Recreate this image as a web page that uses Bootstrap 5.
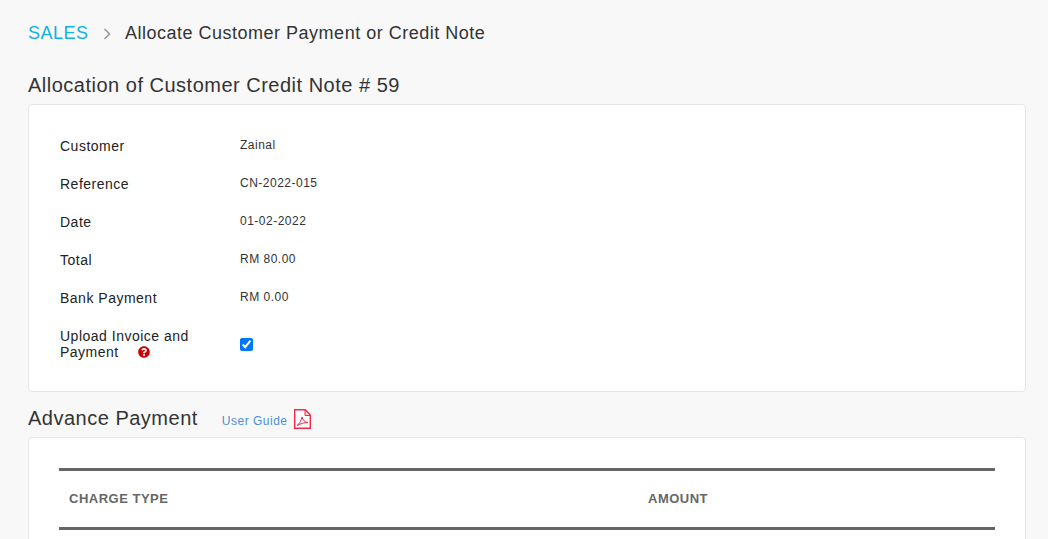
<!DOCTYPE html>
<html lang="en">
<head>
    <meta charset="UTF-8">
    <meta name="viewport" content="width=device-width, initial-scale=1.0">
    <title>Allocate Customer Payment or Credit Note</title>
    <link href="https://cdn.jsdelivr.net/npm/bootstrap@5.3.0/dist/css/bootstrap.min.css" rel="stylesheet">
    <style>
        html { overflow: hidden; }
        body {
            background: #f8f8f8;
            color: #333;
            font-family: "Liberation Sans", Arial, sans-serif;
            letter-spacing: .5px;
        }
        .page-wrap { padding: 23px 22px 0 28px; }
        .crumb-bar { height: 21px; font-size: 18px; line-height: 21px; margin-bottom: 30px; }
        .crumb-bar a { color: #0fb1e6; text-decoration: none; }
        .crumb-sep { width: 36.5px; }
        .section-title { font-size: 20px; font-weight: 400; line-height: 23px; margin: 0; letter-spacing: .5px; }
        .white-box { background: #fff; border: 1px solid #e6e6e6; border-radius: 4px; }
        .info-box { height: 288px; margin-top: 7px; margin-bottom: 15px; padding: 22px 31px 0; }
        .info-row { height: 38px; }
        .info-label { width: 180px; font-size: 14px; line-height: 16px; color: #222; padding-top: 11px; padding-right: 30px; }
        .info-value { font-size: 12px; line-height: 14px; padding-top: 11px; }
        .upload-row { height: 50px; margin-top: 0; }
        .upload-row .info-label { padding-top: 3px; }
        .help-icon { width: 12px; height: 12px; margin-left: 15px; vertical-align: -1px; }
        .upload-row input { margin: 4px 0 0; width: 13px; height: 13px; }
        .guide-link { font-size: 12px; color: #4a90d9; text-decoration: none; margin-left: 24px; padding-top: 4px; }
        .pdf-icon { width: 17px; height: 20px; margin-left: 6px; }
        .table-box { margin-top: 7px; padding: 30px 30px 20px; height: 200px; }
        .charge-head { border-top: 3px solid #666; border-bottom: 3px solid #666; height: 62px; color: #666; font-size: 13px; font-weight: 700; }
        .charge-col { width: 589px; padding-left: 10px; }
    </style>
</head>
<body>
    <div class="page-wrap">
        <!-- Breadcrumb -->
        <div class="crumb-bar d-flex align-items-center">
            <a href="#">SALES</a>
            <span class="crumb-sep d-flex justify-content-center">
                <svg width="8" height="12" viewBox="0 0 8 12"><path d="M1.5 1l5 5-5 5" fill="none" stroke="#999" stroke-width="1.6"/></svg>
            </span>
            <span>Allocate Customer Payment or Credit Note</span>
        </div>

        <h5 class="section-title">Allocation of Customer Credit Note # 59</h5>
        <div class="white-box info-box">
            <div class="info-row d-flex"><div class="info-label">Customer</div><div class="info-value">Zainal</div></div>
            <div class="info-row d-flex"><div class="info-label">Reference</div><div class="info-value">CN-2022-015</div></div>
            <div class="info-row d-flex"><div class="info-label">Date</div><div class="info-value">01-02-2022</div></div>
            <div class="info-row d-flex"><div class="info-label">Total</div><div class="info-value">RM 80.00</div></div>
            <div class="info-row d-flex"><div class="info-label">Bank Payment</div><div class="info-value">RM 0.00</div></div>
            <div class="upload-row d-flex align-items-center">
                <div class="info-label">Upload Invoice and Payment
                    <svg class="help-icon" viewBox="0 0 512 512"><path fill="#c00" d="M504 256c0 136.997-111.043 248-248 248S8 392.997 8 256C8 119.083 119.043 8 256 8s248 111.083 248 248zM262.655 90c-54.497 0-89.255 22.957-116.549 63.758-3.536 5.286-2.353 12.415 2.715 16.258l34.699 26.31c5.205 3.947 12.621 3.008 16.665-2.122 17.864-22.658 30.113-35.797 57.303-35.797 20.429 0 45.698 13.148 45.698 32.958 0 14.976-12.363 22.667-32.534 33.976C247.128 238.528 216 254.941 216 296v4c0 6.627 5.373 12 12 12h56c6.627 0 12-5.373 12-12v-1.333c0-28.462 83.186-29.647 83.186-106.667 0-58.002-60.165-102-116.531-102zM256 338c-25.365 0-46 20.635-46 46 0 25.364 20.635 46 46 46s46-20.636 46-46c0-25.365-20.635-46-46-46z"/></svg>
                </div>
                <input type="checkbox" checked>
            </div>
        </div>

        <div class="d-flex align-items-center">
            <h5 class="section-title">Advance Payment</h5>
            <a href="#" class="guide-link">User Guide</a>
            <svg class="pdf-icon" viewBox="0 0 17 20">
                <path d="M.7 .7h10.500L16.300 6V19.300H.7z" fill="#fff" stroke="#f7274a" stroke-width="1.4"/>
                <path d="M11 1v5.500H16.500z" fill="#fcc" stroke="#f7274a" stroke-width="1"/>
                <path d="M3 16.500c2-1 4-4.500 5-8.500 .5 3 3 5.500 6 5.500-3 0-7.500 1-11 3z" fill="none" stroke="#f7274a" stroke-width="1"/>
            </svg>
        </div>
        <div class="white-box table-box">
            <div class="charge-head d-flex align-items-center">
                <div class="charge-col">CHARGE TYPE</div>
                <div>AMOUNT</div>
            </div>
        </div>
    </div>
    <script src="https://cdn.jsdelivr.net/npm/bootstrap@5.3.0/dist/js/bootstrap.bundle.min.js"></script>
</body>
</html>
